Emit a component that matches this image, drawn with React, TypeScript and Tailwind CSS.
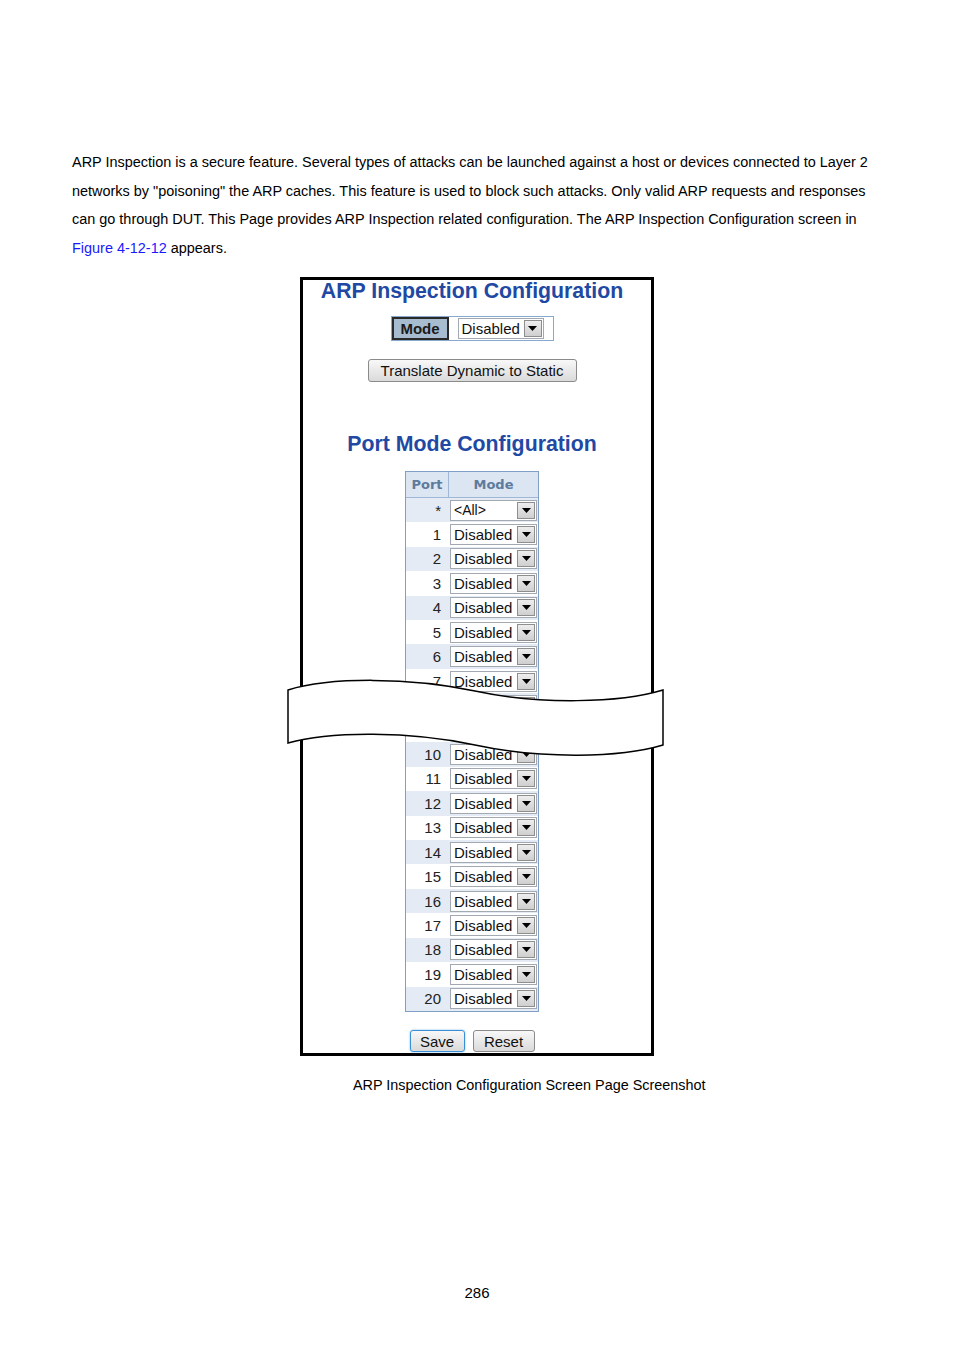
import React from "react";

const Arrow = () => (
  <div className="w-[18px] h-[17px] shrink-0 border border-[#8e8e8e] bg-gradient-to-b from-[#eeeeee] to-[#cfcfcf] flex items-center justify-center">
    <svg width="9" height="5" viewBox="0 0 9 5">
      <path d="M0 0H9L4.5 5Z" fill="#000" />
    </svg>
  </div>
);

const Select = ({ value, className, small }: { value: string; className: string; small?: boolean }) => (
  <div className={`flex items-center h-[21px] border border-[#a2a9b1] bg-white pl-[3px] pr-[1px] ${className}`}>
    <span className={`flex-1 leading-none text-[#111] ${small ? "text-[14px]" : "text-[15px]"}`}>{value}</span>
    <Arrow />
  </div>
);

const Btn = ({ label, className }: { label: string; className: string }) => (
  <div
    className={`h-[22px] flex items-center justify-center rounded-[3px] bg-gradient-to-b from-[#f8f8f8] to-[#dadada] text-[15px] text-[#111] leading-none ${className}`}
  >
    {label}
  </div>
);

export default function App() {
  const rows: string[] = ["*"];
  for (let i = 1; i <= 20; i++) rows.push(String(i));

  return (
    <div
      className="w-[954px] min-h-[1350px] bg-white text-black"
      style={{ fontFamily: '"Liberation Sans", Arial, sans-serif' }}
    >
      <div className="pt-[148px] pl-[72px] text-[14.45px] leading-[28.7px]">
        <div>ARP Inspection is a secure feature. Several types of attacks can be launched against a host or devices connected to Layer 2</div>
        <div>networks by "poisoning" the ARP caches. This feature is used to block such attacks. Only valid ARP requests and responses</div>
        <div>can go through DUT. This Page provides ARP Inspection related configuration. The ARP Inspection Configuration screen in</div>
        <div>
          <span className="text-[#1a1aff]">Figure 4-12-12</span> appears.
        </div>
      </div>

      <div className="mt-[14px] ml-[300px] w-[354px] border-[3px] border-black relative">
        <div className="flex flex-col items-center pr-[10px] pb-[1px]">
          <div className="text-[21.3px] leading-[22px] font-bold text-[#2149a3]">ARP Inspection Configuration</div>

          <div className="mt-[14px] flex border border-[#88a8cc]">
            <div className="w-[57px] h-[23px] bg-[#a8bcd0] border-2 border-[#2a2a2a] flex items-center justify-center text-[15px] font-bold leading-none text-[#1a1a1a]">
              Mode
            </div>
            <div className="px-[9px] flex items-center bg-white">
              <Select value="Disabled" className="w-[86px]" />
            </div>
          </div>

          <Btn label="Translate Dynamic to Static" className="mt-[18px] w-[209px] h-[23px] border border-[#8a8a8a] text-[15.2px]" />

          <div className="mt-[51px] text-[21.3px] leading-[22px] font-bold text-[#2149a3]">Port Mode Configuration</div>

          <div className="mt-[16px] w-[134px] border border-[#7f9fc7]">
            <div
              className="flex h-[26px] bg-[#dce6f3] text-[13px] font-bold text-[#5d7b9d] border-b border-[#9fb6d4]"
              style={{ fontFamily: '"DejaVu Sans", Verdana, sans-serif' }}
            >
              <div className="w-[43px] border-r border-[#9fb6d4] flex items-center justify-center">Port</div>
              <div className="flex-1 flex items-center justify-center">Mode</div>
            </div>
            {rows.map((r, i) => (
              <div key={r} className={`flex items-center h-[24.45px] ${i % 2 === 0 ? "bg-[#e4ebf5]" : "bg-white"}`}>
                <div className="w-[43px] pr-[8px] text-right text-[15px] leading-none text-[#222]">{r}</div>
                <Select value={r === "*" ? "<All>" : "Disabled"} small={r === "*"} className="ml-[1px] w-[87px]" />
              </div>
            ))}
          </div>

          <div className="mt-[18px] flex gap-[8px]">
            <Btn label="Save" className="w-[55px] border border-[#3a8fd4] shadow-[0_0_2px_#6ab4ec]" />
            <Btn label="Reset" className="w-[62px] border border-[#8a8a8a]" />
          </div>
        </div>

        <svg
          className="absolute left-[-23px] top-[390px]"
          width="390"
          height="95"
          viewBox="280 670 390 95"
        >
          <path
            d="M288 690 C330 677 410 677 475 691 C540 705 620 703 663 690 L663 745 C620 758 540 759 475 745 C410 731 330 731 288 743 Z"
            fill="#fff"
            stroke="#000"
            strokeWidth="1.5"
          />
        </svg>
      </div>

      <div className="mt-[19px] pl-[353px] text-[14.4px] leading-[20px]">ARP Inspection Configuration Screen Page Screenshot</div>

      <div className="mt-[188px] text-center text-[15px] leading-[20px]">286</div>
    </div>
  );
}
